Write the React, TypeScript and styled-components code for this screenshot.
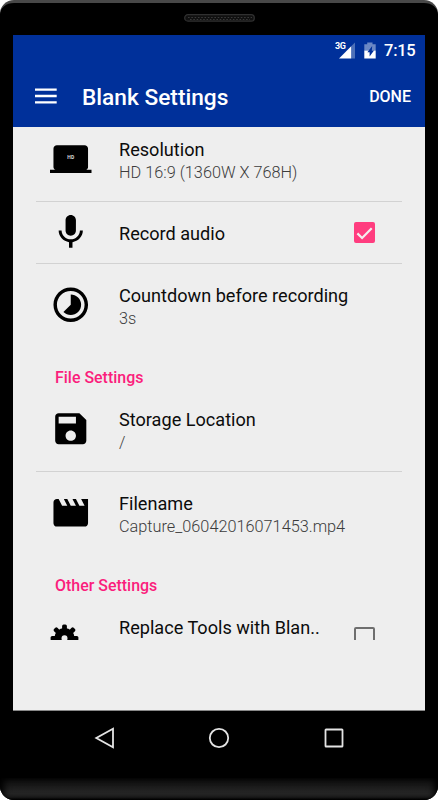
import React from "react";
import styled, { createGlobalStyle } from "styled-components";

const Global = createGlobalStyle`
  * { box-sizing: border-box; }
  body { margin: 0; background: #fff; font-family: Roboto, "Liberation Sans", sans-serif; }
  svg { display: block; flex: none; }
`;

const Phone = styled.div`
  width: 438px;
  height: 800px;
  display: flex;
  flex-direction: column;
  background: #000;
  border-top: 3px solid #484848;
  border-radius: 14px;
  overflow: hidden;
`;

const Earpiece = styled.div`
  height: 32px;
  display: flex;
  justify-content: center;
  padding-top: 11px;
`;

const Screen = styled.main`
  width: 412px;
  height: 675.5px;
  margin: 0 auto;
  display: flex;
  flex-direction: column;
  background: #eee;
  border: solid #888;
  border-width: 0 0 1px;
`;

const Header = styled.header`
  height: 92px;
  flex: none;
  background: #00309a;
  color: #fff;
`;

const StatusBar = styled.div`
  height: 31px;
  display: flex;
  align-items: center;
  padding-left: 322px;
`;

const Clock = styled.span`
  margin-top: 1px;
  font-size: 16.5px;
  line-height: 20px;
  font-weight: 500;
  letter-spacing: -0.25px;
`;

const Toolbar = styled.div`
  height: 61px;
  display: flex;
  align-items: center;
  padding: 0 14px 0 22px;
`;

const MenuIcon = styled.svg`
  margin-top: -2px;
`;

const Heading = styled.h1`
  margin: 2px auto 0 25px;
  font-size: 22.7px;
  line-height: 28px;
  font-weight: 500;
`;

const DoneButton = styled.button`
  border: 0;
  padding: 0;
  background: none;
  color: #fff;
  font: 500 16px/20px Roboto, sans-serif;
`;

const Viewport = styled.section`
  height: 513px;
  overflow: hidden;
  padding: 0 23px;
`;

const List = styled.div`
  margin-top: -9px;
`;

const Row = styled.div<{ $compact?: boolean; $divided?: boolean }>`
  height: ${(p) => (p.$compact ? 62 : p.$divided ? 84 : 83)}px;
  display: flex;
  align-items: center;
  padding-right: 27px;
  border-bottom: ${(p) => (p.$divided ? "1px solid #d2d2d2" : "0")};
`;

const IconCell = styled.div`
  width: 83px;
  padding: 0 0 1px 14px;
  flex: none;
`;

const Label = styled.div`
  flex: 1;
  padding-top: 2px;
  white-space: nowrap;
`;

const Title = styled.div`
  font-size: 18.12px;
  line-height: 24px;
  color: #0c0c0c;
`;

const Summary = styled.div`
  height: 22px;
  font-size: 16.3px;
  line-height: 22px;
  font-weight: 300;
  color: #3c3c3c;
`;

const SectionTitle = styled.h2`
  height: 41px;
  margin: 0;
  padding: 20px 0 0 19px;
  font-size: 15.95px;
  line-height: 22px;
  font-weight: 500;
  color: #fb1d7c;
`;

const Check = styled.span<{ $on?: boolean }>`
  width: 21px;
  height: 21px;
  display: grid;
  place-items: center;
  border-radius: 2px;
  border: 2px solid ${(p) => (p.$on ? "#ff3d7f" : "#6e6e6e")};
  background: ${(p) => (p.$on ? "#ff3d7f" : "transparent")};
`;

const NavBar = styled.nav`
  height: 65px;
  display: flex;
  justify-content: space-between;
  align-items: center;
  padding: 0 92px 10px;
  margin-bottom: 2px;
`;

const Chin = styled.div`
  flex: 1;
  background: linear-gradient(#0d0d0d, #262626 70%, #222 88%, #000);
  box-shadow: inset 5px 0 7px -1px #000, inset -5px 0 7px -1px #000;
`;

function Glyph({ d, children }: { d?: string; children?: React.ReactNode }) {
  return (
    <svg width="41.5" height="41.5" viewBox="0 0 24 24" fill="#000">
      {d ? <path fillRule="evenodd" d={d} /> : children}
    </svg>
  );
}

const MIC =
  "M12 14.3c1.66 0 2.99-1.34 2.99-3L15 5.3c0-1.66-1.34-3-3-3S9 3.64 9 5.3v6c0 1.66 1.34 3 3 3zm5.3-3c0 3-2.54 5.1-5.3 5.1S6.7 14.3 6.7 11.3H5c0 3.42 2.72 6.23 6 6.72V21.3h2v-3.28c3.28-.48 6-3.3 6-6.72h-1.7z";
const TIMELAPSE =
  "M16.24 7.76C15.07 6.59 13.54 6 12 6v6l-4.24 4.24c2.34 2.34 6.14 2.34 8.49 0 2.34-2.34 2.34-6.14-.01-8.48zM12 2C6.48 2 2 6.48 2 12s4.48 10 10 10 10-4.48 10-10S17.52 2 12 2zm0 18c-4.42 0-8-3.58-8-8s3.58-8 8-8 8 3.58 8 8-3.58 8-8 8z";
const SAVE =
  "M17 3H5c-1.11 0-2 .9-2 2v14c0 1.1.89 2 2 2h14c1.1 0 2-.9 2-2V7l-4-4zm-5 16c-1.66 0-3-1.34-3-3s1.34-3 3-3 3 1.34 3 3-1.34 3-3 3zm3-10H5V5h10v4z";
const MOVIE =
  "M18 4l2 4h-3l-2-4h-2l2 4h-3l-2-4H8l2 4H7L5 4H4c-1.1 0-1.99.9-1.99 2L2 18c0 1.1.9 2 2 2h16c1.1 0 2-.9 2-2V4h-4z";

function Gear() {
  return (
    <svg width="29" height="29" viewBox="-14.5 -15.3 29 29">
      <circle r="6.6" fill="none" stroke="#000" strokeWidth="7.2" />
      {[0, 45, 90, 135, 180, 225, 270, 315].map((a) => (
        <rect key={a} x="-2.4" y="-13.9" width="4.8" height="6" rx="1.5" transform={`rotate(${a})`} />
      ))}
    </svg>
  );
}

interface ItemProps {
  icon: React.ReactNode;
  title: string;
  summary?: string;
  compact?: boolean;
  divided?: boolean;
  checked?: boolean;
}

function Item({ icon, title, summary, compact, divided, checked }: ItemProps) {
  return (
    <Row $compact={compact} $divided={divided}>
      <IconCell>{icon}</IconCell>
      <Label>
        <Title>{title}</Title>
        {summary !== undefined && <Summary>{summary}</Summary>}
      </Label>
      {checked !== undefined && (
        <Check $on={checked}>
          {checked && (
            <svg width="17" height="14" viewBox="0 0 17 14" fill="none" stroke="#f4eeee" strokeWidth="2.2">
              <path d="M1.4 7.4l4.7 4.6L15.7 2.3" />
            </svg>
          )}
        </Check>
      )}
    </Row>
  );
}

export default function App() {
  return (
    <>
      <Global />
      <Phone>
        <Earpiece>
          <svg width="71" height="8" viewBox="0 0 71 8">
            <rect x=".7" y=".7" width="69.6" height="6.4" rx="3.2" fill="#101010" stroke="#303030" strokeWidth="1.3" />
            <path d="M4 3.5h64M6 5.5h60" stroke="#393939" strokeWidth="1.2" strokeDasharray="1.6 1.7" />
          </svg>
        </Earpiece>
        <Screen>
          <Header>
            <StatusBar>
              <svg width="49" height="18" viewBox="0 0 49 18">
                <text x="0" y="7.4" fontSize="9" fontWeight="700" fill="#fff" letterSpacing="-.3" fontFamily="Roboto">3G</text>
                <path d="M20 .6V16.6H16.2V4.3z" fill="#4d70b8" />
                <path d="M16.2 4.3V16.6H4z" fill="#fff" />
                <path d="M29.3 2.2h2.9V.4h5.3v1.8h3.2V8.6H29.3z" fill="#6b88c5" />
                <path d="M29.3 8.6h11.4v8H29.3z" fill="#fff" />
                <path d="M37.2 4l-4.8 6.2h2.2v4.4l4.4-6.2h-2.2z" fill="#00309a" />
              </svg>
              <Clock>7:15</Clock>
            </StatusBar>
            <Toolbar>
              <MenuIcon width="22" height="16" viewBox="0 0 22 16" stroke="#fff" strokeWidth="2.3">
                <path d="M0 1.7h21.7M0 8h21.7M0 14.3h21.7" />
              </MenuIcon>
              <Heading>Blank Settings</Heading>
              <DoneButton>DONE</DoneButton>
            </Toolbar>
          </Header>
          <Viewport>
            <List>
              <Item
                divided
                title="Resolution"
                summary="HD 16:9 (1360W X 768H)"
                icon={
                  <Glyph>
                    <path d="M4 4.2h16c1.1 0 2 .9 2 2v10.5c0 .8-.5 1.4-1.2 1.6H24v2H0v-2h3.2C2.5 18.1 2 17.5 2 16.7V6.2c0-1.1.9-2 2-2z" />
                    <text x="12" y="12.2" fontSize="2.9" fontWeight="700" fill="#ddd" textAnchor="middle" fontFamily="Roboto">HD</text>
                  </Glyph>
                }
              />
              <Item compact divided title="Record audio" checked icon={<Glyph d={MIC} />} />
              <Item title="Countdown before recording" summary="3s" icon={<Glyph d={TIMELAPSE} />} />
              <SectionTitle>File Settings</SectionTitle>
              <Item divided title="Storage Location" summary="/" icon={<Glyph d={SAVE} />} />
              <Item title="Filename" summary="Capture_06042016071453.mp4" icon={<Glyph d={MOVIE} />} />
              <SectionTitle>Other Settings</SectionTitle>
              <Item title="Replace Tools with Blan.." summary="" checked={false} icon={<Gear />} />
            </List>
          </Viewport>
        </Screen>
        <NavBar>
          <svg width="24" height="24" viewBox="0 0 24 24" fill="none" stroke="#e4e4e4" strokeWidth="1.8">
            <path d="M21 2.8v18.4L4.3 12z" />
          </svg>
          <svg width="24" height="24" viewBox="0 0 24 24" fill="none" stroke="#e4e4e4" strokeWidth="1.8">
            <circle cx="12" cy="12" r="9.2" />
          </svg>
          <svg width="24" height="24" viewBox="0 0 24 24" fill="none" stroke="#e4e4e4" strokeWidth="1.8">
            <rect x="3.5" y="3.5" width="17" height="17" rx=".6" />
          </svg>
        </NavBar>
        <Chin />
      </Phone>
    </>
  );
}
